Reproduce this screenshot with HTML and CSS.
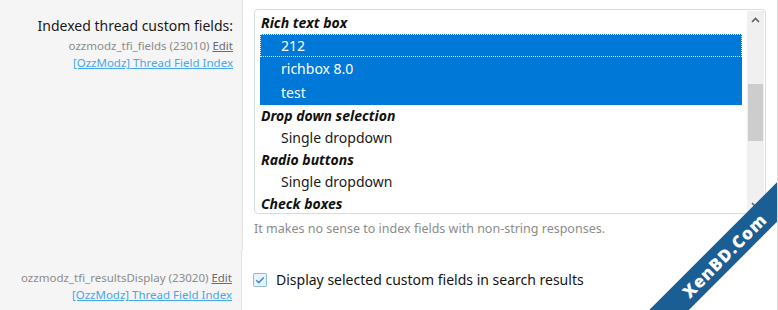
FILE: index.html
```html
<!DOCTYPE html>
<html>
<head>
<meta charset="utf-8">
<link rel="stylesheet" href="styles.css">
</head>
<body>
<div class="form">
  <div class="row row-select">
    <div class="label-cell">
      <div class="label-main">Indexed thread custom fields:</div>
      <div class="label-hint">ozzmodz_tfi_fields (23010) <span class="edit">Edit</span></div>
      <div class="label-link">[OzzModz] Thread Field Index</div>
    </div>
    <div class="input-cell">
      <div class="listbox">
        <div class="list">
          <div class="group">Rich text box</div>
          <div class="opt sel focus">212</div>
          <div class="opt sel">richbox 8.0</div>
          <div class="opt sel last">test</div>
          <div class="group">Drop down selection</div>
          <div class="opt">Single dropdown</div>
          <div class="group">Radio buttons</div>
          <div class="opt">Single dropdown</div>
          <div class="group">Check boxes</div>
        </div>
        <div class="scrollbar">
          <div class="sb-arrow sb-up">
            <svg width="9" height="6" viewBox="0 0 9 6"><path d="M1 5 L4.5 1.5 L8 5" fill="none" stroke="#606060" stroke-width="1.6"/></svg>
          </div>
          <div class="sb-track">
            <div class="sb-gap-top"></div>
            <div class="sb-thumb"></div>
          </div>
          <div class="sb-arrow sb-down">
            <svg width="9" height="6" viewBox="0 0 9 6"><path d="M1 1 L4.5 4.5 L8 1" fill="none" stroke="#606060" stroke-width="1.6"/></svg>
          </div>
        </div>
      </div>
      <div class="explain">It makes no sense to index fields with non-string responses.</div>
    </div>
  </div>
  <div class="row row-check">
    <div class="label-cell">
      <div class="label-hint">ozzmodz_tfi_resultsDisplay (23020) <span class="edit">Edit</span></div>
      <div class="label-link">[OzzModz] Thread Field Index</div>
    </div>
    <div class="input-cell">
      <label class="check">
        <span class="box">
          <svg width="10" height="8" viewBox="0 0 10 8"><path d="M1.2 4.2 L3.8 6.6 L8.8 1.4" fill="none" stroke="#3d8fd6" stroke-width="1.5"/></svg>
        </span>
        <span class="check-text">Display selected custom fields in search results</span>
      </label>
    </div>
  </div>
  <div class="ribbon"><span>XenBD.Com</span></div>
</div>
</body>
</html>
```

FILE: styles.css
```css
html, body {
  margin: 0;
  padding: 0;
  background: #fff;
}
body {
  font-family: "Noto Sans", "Open Sans", sans-serif;
  color: #141414;
  width: 778px;
  height: 310px;
  overflow: hidden;
}
.form {
  position: relative;
  width: 777px;
  height: 310px;
  border-right: 1px solid #dcdcdc;
  overflow: hidden;
}
.row {
  display: flex;
}
.label-cell {
  width: 233px;
  padding-right: 9px;
  background: #f5f5f5;
  border-right: 1px solid #e2e2e2;
  text-align: right;
  flex: none;
}
.input-cell {
  flex: 1;
  padding-left: 11px;
  padding-right: 10px;
}
.row-select .label-cell {
  padding-top: 16px;
  height: 234px;
}
.row-select .input-cell {
  padding-top: 9px;
}
.label-main {
  font-size: 14px;
  line-height: 20px;
  color: #1a1a1a;
  margin-bottom: 1px;
}
.label-hint {
  font-size: 11.5px;
  line-height: 17px;
  color: #8c8c8c;
}
.edit {
  color: #6b6b6b;
  text-decoration: underline;
}
.label-link {
  font-size: 11.5px;
  line-height: 17px;
  color: #47a7eb;
  text-decoration: underline;
}
.listbox {
  width: 512px;
  height: 205px;
  border: 1px solid #d2e0dd;
  border-radius: 4px;
  display: flex;
  padding: 2px 1px 0 5px;
  box-sizing: border-box;
}
.list {
  flex: 1;
  padding-right: 5px;
  overflow: hidden;
}
.group {
  height: 22px;
  line-height: 22px;
  font-size: 14px;
  font-weight: 700;
  font-style: italic;
  color: #111;
  padding-left: 1px;
}
.opt {
  height: 22px;
  line-height: 22px;
  font-size: 14px;
  padding-left: 21px;
  color: #1a1a1a;
}
.opt.sel {
  background: #0078d7;
  color: #fff;
  height: 24px;
  line-height: 24px;
}
.opt.focus {
  height: 23px;
  line-height: 23px;
  outline: 1px dotted #d8ecff;
  outline-offset: -1px;
}
.scrollbar {
  width: 17px;
  flex: none;
  background: #f0f0f0;
  display: flex;
  flex-direction: column;
  margin-top: -1px;
}
.sb-arrow {
  height: 17px;
  display: flex;
  align-items: center;
  justify-content: center;
  flex: none;
}
.sb-track {
  flex: 1;
}
.sb-gap-top {
  height: 56px;
}
.sb-thumb {
  height: 57px;
  margin: 0 1px;
  background: #cdcdcd;
}
.explain {
  font-size: 12.5px;
  line-height: 18px;
  color: #8c8c8c;
  margin-top: 6px;
}
.row-check .label-cell {
  height: 62px;
  padding-top: 19px;
  box-sizing: border-box;
  width: 242px;
}
.row-check .input-cell {
  padding-top: 20px;
}
.check {
  display: flex;
  align-items: center;
  gap: 9px;
}
.box {
  width: 12px;
  height: 12px;
  border: 1px solid #8bbbe3;
  border-radius: 2px;
  background: #eaf3fb;
  display: flex;
  align-items: center;
  justify-content: center;
}
.check-text {
  font-size: 14px;
  line-height: 20px;
  color: #141414;
}
.ribbon {
  position: absolute;
  left: 574px;
  top: 241px;
  width: 300px;
  height: 28px;
  background: #1b5e94;
  transform: rotate(-45deg);
  display: flex;
  align-items: center;
  justify-content: center;
}
.ribbon span {
  color: #fff;
  font-family: "Open Sans", sans-serif;
  font-weight: 800;
  font-size: 17px;
  letter-spacing: 1px;
}
```
